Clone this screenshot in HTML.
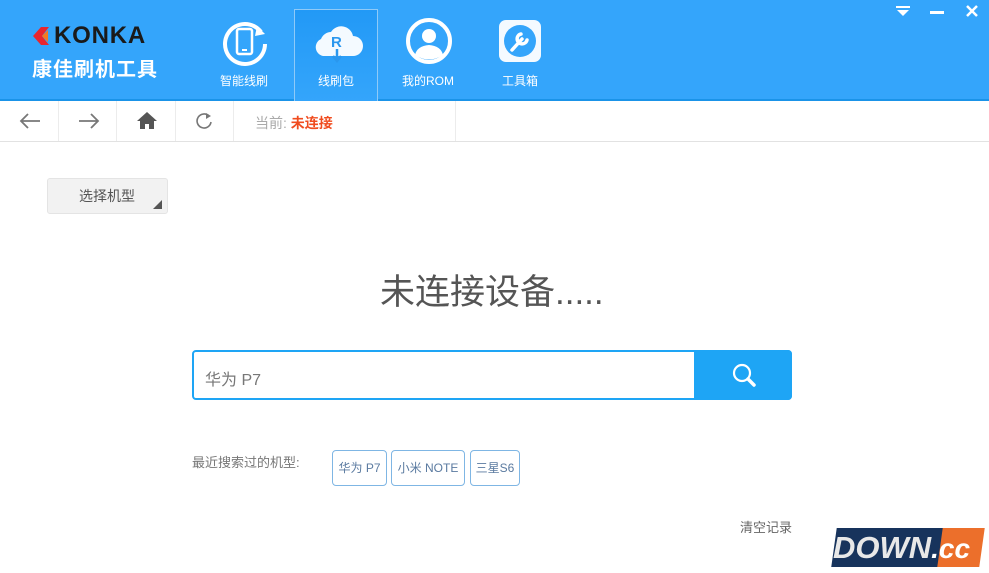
<!DOCTYPE html>
<html><head><meta charset="utf-8"><style>
*{margin:0;padding:0;box-sizing:border-box}
body{width:989px;height:573px;overflow:hidden;background:#fff;font-family:"Liberation Sans","Noto Sans CJK SC",sans-serif;position:relative}
.hdr{position:absolute;left:0;top:0;width:989px;height:101px;background:#34a5fb;border-bottom:2px solid #1a93e8}
.abs{position:absolute}
.tab{position:absolute;top:0;width:84px;height:99px;color:#fff;font-size:12px;text-align:center}
.tab span{position:absolute;left:0;right:0;top:72px}
.tab svg{position:absolute;left:19px;top:18px}
.nav{position:absolute;top:101px;left:0;width:989px;height:41px;border-bottom:1px solid #e2e2e2}
.sep{position:absolute;top:101px;width:1px;height:40px;background:#ececec}
.tag{position:absolute;top:450px;height:36px;border:1px solid #7fb6e4;border-radius:4px;font-size:12px;color:#5a7aa0;line-height:34px;text-align:center}
</style></head><body>
<div class="hdr"></div>
<svg class="abs" style="left:31px;top:26px" width="20" height="20" viewBox="0 0 20 20"><path d="M10 1 L2 10 L10 19 L18 19 L11 10 L18 1Z" fill="#e8262e"/><path d="M11 10 L17 4 L17 16Z" fill="#f47a20"/></svg>
<div class="abs" style="left:54px;top:22px;font-size:24px;font-weight:bold;color:#1a1a1a;letter-spacing:0.8px">KONKA</div>
<div class="abs" style="left:32px;top:53px;font-size:20px;color:#fff;font-weight:bold;letter-spacing:1px">康佳刷机工具</div>
<div class="abs" style="left:294px;top:9px;width:84px;height:92px;border:1px solid #8fcaf8;border-bottom:none;background:linear-gradient(#2299f6,#34a5fb)"></div>
<div class="tab" style="left:202px"><svg width="48" height="48" viewBox="0 0 48 48"><path d="M40 14 A20 20 0 1 0 44 26" fill="none" stroke="#fff" stroke-width="4"/><path d="M36 8 L44 16 L34 18Z" fill="#fff"/><rect x="16" y="11" width="15" height="25" rx="2" fill="none" stroke="#fff" stroke-width="2.5"/><rect x="21" y="31" width="5" height="2" fill="#fff"/></svg><span>智能线刷</span></div>
<div class="tab" style="left:294px"><svg width="50" height="48" viewBox="0 0 50 48"><path d="M10 38 A9 9 0 0 1 8 21 A11 11 0 0 1 18 14 A12 12 0 0 1 40 18 A10 10 0 0 1 40 38Z" fill="#f4faff"/><text x="18" y="29" font-family="Liberation Sans" font-weight="bold" font-size="15" fill="#2a97ee">R</text><path d="M24 31 V42 M20 38 L24 43 L28 38" stroke="#2a97ee" stroke-width="2.5" fill="none"/></svg><span>线刷包</span></div>
<div class="tab" style="left:386px"><svg width="48" height="48" viewBox="0 0 48 48"><circle cx="24" cy="23" r="21" fill="none" stroke="#fff" stroke-width="4"/><circle cx="24" cy="18" r="7" fill="#fff"/><path d="M10 37 Q12 28 24 27 Q36 28 38 37 Q24 46 10 37Z" fill="#fff"/></svg><span>我的ROM</span></div>
<div class="tab" style="left:478px"><svg width="46" height="46" viewBox="0 0 46 46"><rect x="2" y="2" width="42" height="42" rx="7" fill="#f4faff"/><circle cx="23" cy="23" r="16" fill="#34a5fb"/><path d="M15 32 L25 21 M24 16 A5 5 0 1 0 30 22" stroke="#fff" stroke-width="3.5" fill="none" stroke-linecap="round"/></svg><span>工具箱</span></div>
<svg class="abs" style="left:896px;top:6px" width="14" height="10"><rect x="0" y="0" width="14" height="2" fill="#fff"/><path d="M1 4 H13 L7 10Z" fill="#fff"/></svg>
<div class="abs" style="left:930px;top:11px;width:14px;height:3px;background:#fff"></div>
<svg class="abs" style="left:966px;top:5px" width="12" height="12"><path d="M1 1 L11 11 M11 1 L1 11" stroke="#fff" stroke-width="2.5"/></svg>
<div class="nav"></div>
<div class="sep" style="left:58px"></div><div class="sep" style="left:116px"></div><div class="sep" style="left:175px"></div><div class="sep" style="left:233px"></div><div class="sep" style="left:455px"></div>
<svg class="abs" style="left:18px;top:111px" width="24" height="20"><path d="M22 10 H3 M10 3 L3 10 L10 17" stroke="#777" stroke-width="1.8" fill="none"/></svg>
<svg class="abs" style="left:77px;top:111px" width="24" height="20"><path d="M2 10 H21 M14 3 L21 10 L14 17" stroke="#777" stroke-width="1.8" fill="none"/></svg>
<svg class="abs" style="left:136px;top:110px" width="22" height="20"><path d="M11 2 L1 11 H4 V19 H9 V14 H13 V19 H18 V11 H21Z" fill="#555"/></svg>
<svg class="abs" style="left:193px;top:110px" width="22" height="22"><path d="M16 6 A7 7 0 1 0 18 12" stroke="#777" stroke-width="1.6" fill="none"/><path d="M13 3 L18 6 L13 9Z" fill="#777"/></svg>
<div class="abs" style="left:255px;top:113px;font-size:14px;color:#aaa">当前: <span style="color:#f04c1f;font-weight:bold">未连接</span></div>
<div class="abs" style="left:47px;top:178px;width:121px;height:36px;background:#f2f2f2;border:1px solid #e4e4e4;border-radius:3px;font-size:14px;color:#555;line-height:34px;padding-left:31px">选择机型</div>
<svg class="abs" style="left:153px;top:200px" width="9" height="9"><path d="M9 0 V9 H0Z" fill="#555"/></svg>
<div class="abs" style="left:380px;top:264px;font-size:35px;color:#555">未连接设备.....</div>
<div class="abs" style="left:192px;top:350px;width:600px;height:50px;border:2px solid #1ea5f5;border-radius:4px;background:#fff"></div>
<div class="abs" style="left:694px;top:350px;width:98px;height:50px;background:#1ea5f5;border-radius:0 4px 4px 0"></div>
<svg class="abs" style="left:731px;top:362px" width="26" height="26"><circle cx="11" cy="11" r="8" stroke="#fff" stroke-width="2.2" fill="none"/><path d="M17 17 L23 23" stroke="#fff" stroke-width="3.5" stroke-linecap="round"/></svg>
<div class="abs" style="left:205px;top:366px;font-size:16px;color:#777">华为 P7</div>
<div class="abs" style="left:192px;top:452px;font-size:13px;color:#777">最近搜索过的机型:</div>
<div class="tag" style="left:332px;width:55px">华为 P7</div>
<div class="tag" style="left:391px;width:74px">小米 NOTE</div>
<div class="tag" style="left:470px;width:50px">三星S6</div>
<div class="abs" style="left:740px;top:517px;font-size:13px;color:#666">清空记录</div>
<div class="abs" style="left:834px;top:528px;width:110px;height:39px;background:#17335c;transform:skewX(-8deg)"></div>
<div class="abs" style="left:940px;top:528px;width:42px;height:39px;background:#ec6f2b;transform:skewX(-8deg)"></div>
<div class="abs" style="left:833px;top:530px;font-size:31px;font-style:italic;font-weight:bold;color:#e8e8e8;letter-spacing:0px">DOWN<span style="color:#fff;font-size:28px">.cc</span></div>
</body></html>
